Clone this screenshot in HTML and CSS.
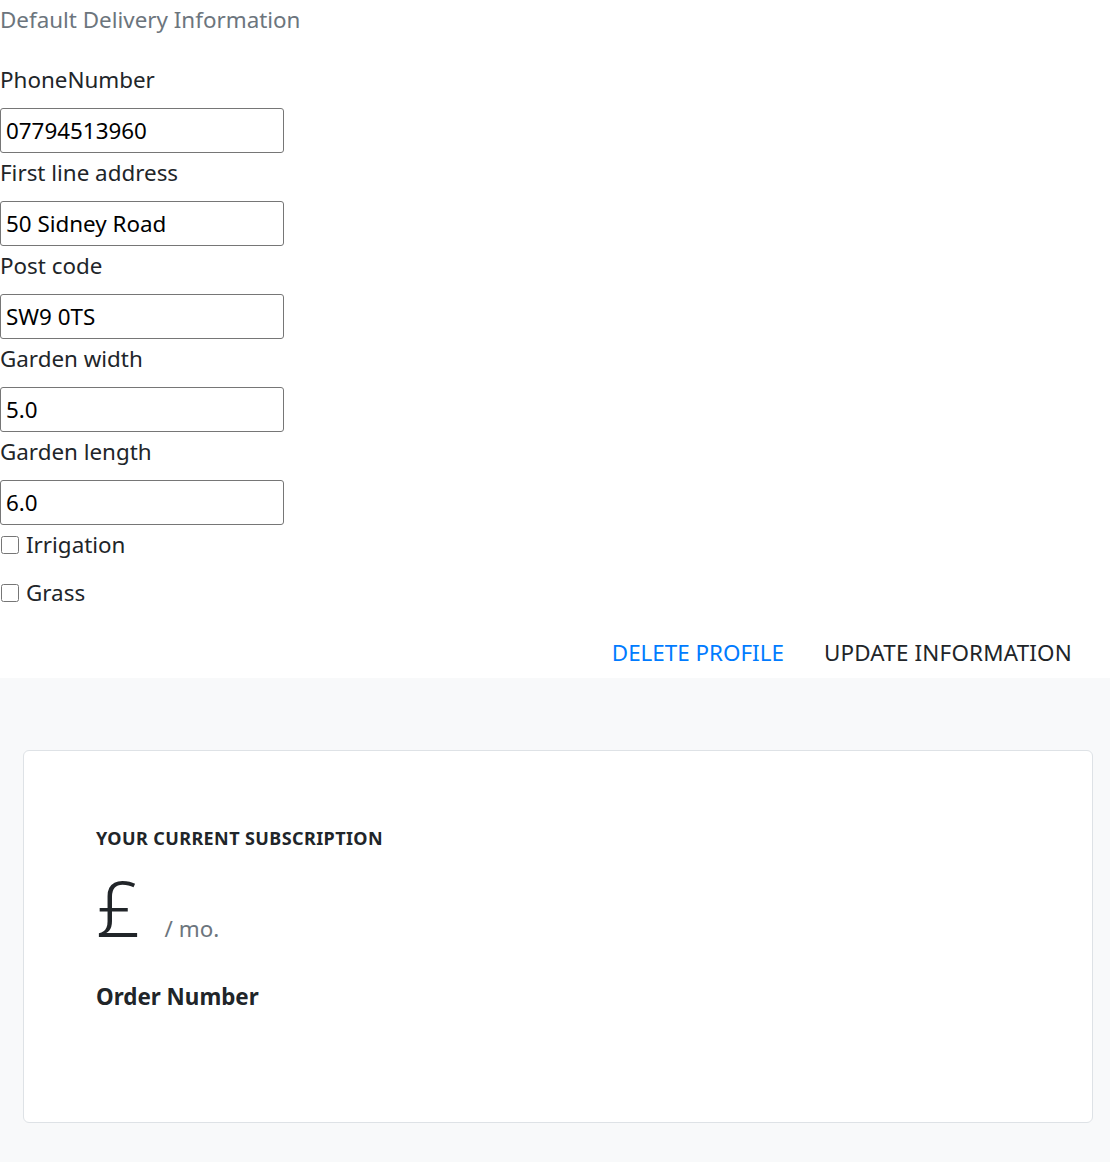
FILE: index.html
```html
<!DOCTYPE html>
<html lang="en">
<head>
<meta charset="utf-8">
<title>Default Delivery Information</title>
<link rel="stylesheet" href="styles.css">
</head>
<body>
<section class="delivery">
  <h2 class="title">Default Delivery Information</h2>
  <form class="form">
    <label class="field-label" for="phone">PhoneNumber</label>
    <input class="field" id="phone" type="text" value="07794513960">
    <label class="field-label" for="addr">First line address</label>
    <input class="field" id="addr" type="text" value="50 Sidney Road">
    <label class="field-label" for="post">Post code</label>
    <input class="field" id="post" type="text" value="SW9 0TS">
    <label class="field-label" for="gw">Garden width</label>
    <input class="field" id="gw" type="text" value="5.0">
    <label class="field-label" for="gl">Garden length</label>
    <input class="field" id="gl" type="text" value="6.0">
    <label class="check"><input type="checkbox" class="box"> Irrigation</label>
    <label class="check"><input type="checkbox" class="box"> Grass</label>
    <div class="actions">
      <button type="button" class="btn btn-link">DELETE PROFILE</button>
      <button type="button" class="btn btn-plain">UPDATE INFORMATION</button>
    </div>
  </form>
</section>
<section class="subscription">
  <div class="card">
    <h6 class="sub-title">YOUR CURRENT SUBSCRIPTION</h6>
    <div class="price"><span class="currency">£</span><span class="per">/ mo.</span></div>
    <h5 class="order">Order Number</h5>
  </div>
</section>
</body>
</html>
```

FILE: styles.css
```css
* { box-sizing: border-box; }
html, body { margin: 0; padding: 0; }
body {
  font-family: "Noto Sans", "Open Sans", sans-serif;
  color: #212529;
  background: #fff;
  font-size: 22.4px;
}
.title {
  margin: 0;
  font-weight: 400;
  font-size: 22.4px;
  line-height: 40px;
  color: #6c757d;
  height: 60px;
}
.form { display: flex; flex-direction: column; align-items: flex-start; }
.field-label {
  display: block;
  font-size: 22.4px;
  line-height: 34px;
  padding-top: 3px;
  margin-bottom: 11px;
  color: #212529;
}
.field {
  width: 284px;
  height: 45px;
  border: 1px solid #767676;
  border-radius: 3px;
  padding: 0 5px;
  font-family: inherit;
  font-size: 22.4px;
  color: #000;
  margin: 0;
}
.check {
  display: flex;
  align-items: center;
  font-size: 22.4px;
  line-height: 34px;
  padding-top: 3px;
  margin-bottom: 11px;
  gap: 7px;
}
.box {
  width: 18px; height: 18px; margin: 0 0 0 1px;
}
.actions {
  align-self: stretch;
  display: flex;
  justify-content: flex-end;
  align-items: center;
  padding: 5px 21px 0 0;
  height: 57px;
  gap: 6px;
}
.btn {
  background: none;
  border: 0;
  font-family: inherit;
  font-size: 22.4px;
  padding: 8px 17px;
  cursor: pointer;
}
.btn-link { color: #007bff; }
.btn-plain { color: #212529; letter-spacing: 0.2px; }
.subscription {
  background: #f8f9fa;
  padding: 72px 17px 39px 23px;
}
.card {
  background: #fff;
  border: 1px solid #dee2e6;
  border-radius: 6px;
  height: 373px;
  padding: 72px 72px;
}
.sub-title {
  margin: 0;
  font-size: 18px;
  font-weight: 700;
  line-height: 30px;
  letter-spacing: 0.4px;
}
.price {
  display: flex;
  align-items: baseline;
  margin-top: 15px;
  height: 109px;
}
.currency { font-size: 78px; line-height: 78px; font-weight: 300; }
.per { font-size: 22.4px; color: #6c757d; margin-left: 24px; }
.order { margin: 0; font-size: 22.4px; font-weight: 700; line-height: 40px; }
```
